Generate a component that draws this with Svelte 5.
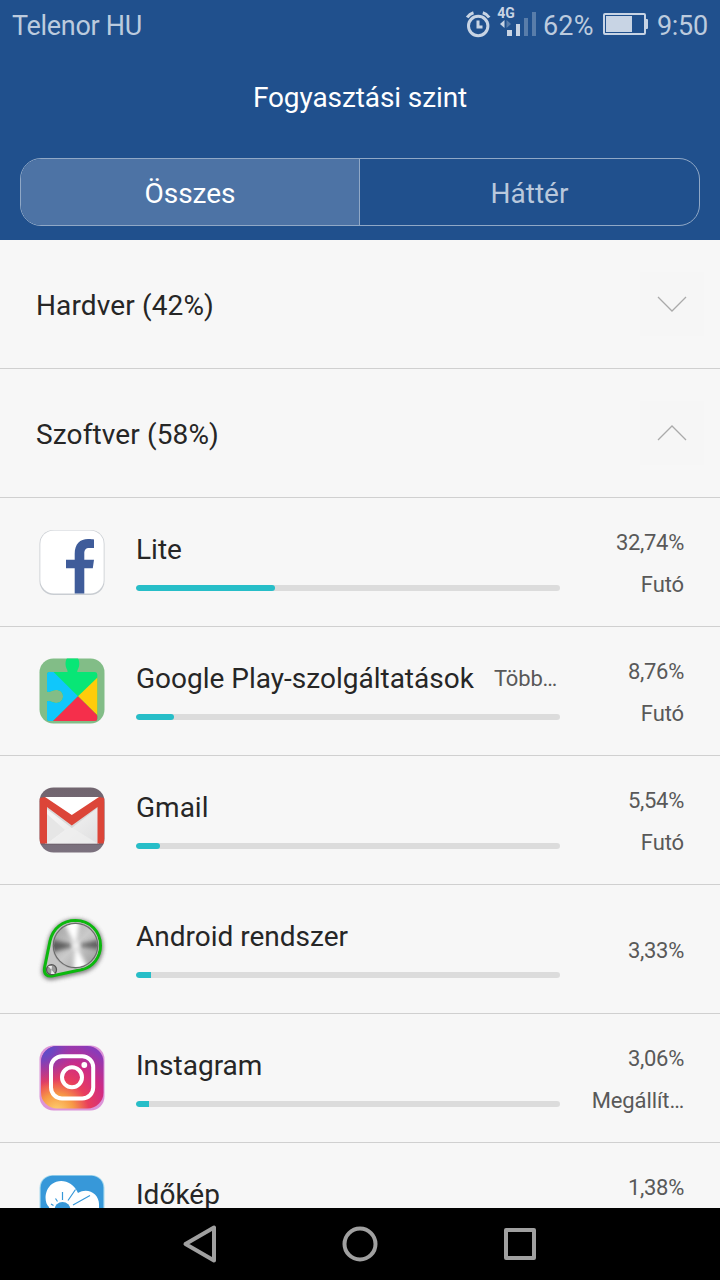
<script lang="ts">
	type App = {
		icon: string;
		name: string;
		usage: number;
		note?: string;
		state?: string;
	};

	const apps: App[] = [
		{ icon: 'facebook', name: 'Lite', usage: 32.74, state: 'Futó' },
		{ icon: 'play', name: 'Google Play-szolgáltatások', usage: 8.76, note: 'Több…', state: 'Futó' },
		{ icon: 'gmail', name: 'Gmail', usage: 5.54, state: 'Futó' },
		{ icon: 'android', name: 'Android rendszer', usage: 3.33 },
		{ icon: 'instagram', name: 'Instagram', usage: 3.06, state: 'Megállít…' },
		{ icon: 'idokep', name: 'Időkép', usage: 1.38, state: '' }
	];

	let tab = $state('all');
	let hardwareOpen = $state(false);
	let softwareOpen = $state(true);

	function percent(n: number) {
		return n.toFixed(2).replace('.', ',') + '%';
	}
</script>

{#snippet chevron(open: boolean)}
	<span class="chevron">
		<svg width="32" height="18" viewBox="0 0 32 18">
			<path d={open ? 'M2 16 L16 2 L30 16' : 'M2 2 L16 16 L30 2'} />
		</svg>
	</span>
{/snippet}

{#snippet appIcon(icon: string)}
	<svg class="icon" width="64" height="64" viewBox="0 0 64 64">
		{#if icon === 'facebook'}
			<rect x="-.5" y="0" width="65" height="65" rx="14" fill="#c9cdd2" />
			<rect x=".3" y=".4" width="63.4" height="63" rx="13.5" fill="#fff" />
			<path fill="#3f5c9a" d="M34.7 63.4V38.3H26V29.8H34.7V24C34.7 14 40 9 48 9C51 9 53 9.2 54 9.5V18H49.5C45.5 18 44.3 20 44.3 23.5V29.8H54L52.8 38.3H44.3V63.4Z" />
		{:else if icon === 'play'}
			<clipPath id="tile"><rect x="-.5" y="-.5" width="65" height="65" rx="14" /></clipPath>
			<clipPath id="puzzle">
				<path d="M9 13H27.5C28 11 25.5 9 25.5 5C25.5 0 28 -4 32.3 -4C37 -4 39.3 0 39.3 5C39.3 9 36.8 11 37.3 13H55Q57.3 13 57.3 15.5V59.5Q57.3 62 55 62H9.5Q7 62 7 59.5V42.5C10 41 12 44 16 44C20 44 23 41.5 23 37.3C23 33 20 31 16 31C12 31 10 34 7 32.5V15.5Q7 13 9 13Z" />
			</clipPath>
			<g clip-path="url(#tile)">
				<rect x="-1" y="-1" width="66" height="66" fill="#82bd87" />
				<g clip-path="url(#puzzle)">
					<rect x="0" y="-5" width="64" height="70" fill="#08e676" />
					<path d="M7 6.5L38 37.3L13 62H7Z" fill="#10c7fb" />
					<path d="M58 18L38 37.3L58 57Z" fill="#ffcc0a" />
					<path d="M38 37.3L12.5 62.5H58V57Z" fill="#f52f4b" />
				</g>
			</g>
		{:else if icon === 'gmail'}
			<linearGradient id="mailBack" x1="0" y1="0" x2="0" y2="1">
				<stop offset="0" stop-color="#71656f" />
				<stop offset="1" stop-color="#7b717e" />
			</linearGradient>
			<linearGradient id="paper" x1="0" y1="0" x2="1" y2="1">
				<stop offset=".3" stop-color="#f4f4f4" />
				<stop offset="1" stop-color="#dfdfe0" />
			</linearGradient>
			<clipPath id="mailTile"><rect x="-.5" y="-.5" width="65" height="65" rx="14" /></clipPath>
			<g clip-path="url(#mailTile)">
				<rect x="-1" y="-1" width="66" height="66" fill="url(#mailBack)" />
				<path d="M0 55.5H64V57H0Z" fill="#62515c" opacity=".35" />
				<rect x="5" y="9" width="54" height="46.5" fill="url(#paper)" />
				<path d="M5 9H59L31.8 29Z" fill="#fff" />
				<path d="M7 26L25 42L7 55.5Z" fill="#e6e6e6" />
				<path d="M7 55.5L25 42L32 39.5L57.5 55.5Z" fill="#efefef" opacity=".7" />
				<path d="M7 17L31.8 36L57.5 17V20L31.8 40L7 21Z" fill="#cfcfcf" opacity=".7" />
				<path d="M-.5 10L5 9L31.8 27L59 9L64.5 10V55.5H57.5V19L31.8 37.5L7 19V55.5H-.5Z" fill="#dc4538" />
			</g>
		{:else if icon === 'android'}
			<linearGradient id="metal" x1="0" y1="0" x2="1" y2="1">
				<stop offset="0" stop-color="#a0a0a0" />
				<stop offset=".5" stop-color="#cacaca" />
				<stop offset="1" stop-color="#999" />
			</linearGradient>
			<filter id="soft" x="-30%" y="-30%" width="160%" height="160%">
				<feGaussianBlur stdDeviation="2" />
			</filter>
			<clipPath id="disc"><circle cx="35.5" cy="28.5" r="21.5" /></clipPath>
			<path class="belt-shadow" filter="url(#soft)" d="M10 25C13 12 23 4 35.5 4C50 4 61 15.500 61 29.500C61 41 54 51 42 54L13 60.500C7 62 3 58 4 52Z" />
			<path class="belt" d="M10 24C13 11 23 3.500 35.500 3.500C50 3.500 60.500 14.500 60.500 28.500C60.500 40 53 50 42 52.500L13 58.800C7 60 3.500 57 4.500 51Z" />
			<circle cx="35.5" cy="28.5" r="23.5" fill="#b5b5b5" />
			<circle cx="35.5" cy="28.5" r="22.2" fill="url(#metal)" stroke="#6b6b6b" stroke-width="1.2" />
			<g clip-path="url(#disc)">
				<g filter="url(#soft)">
					<path d="M35.5 28.5L10 22V36Z" fill="#5f5f5f" />
					<path d="M35.5 28.5L62 22V33Z" fill="#626262" />
					<path d="M35.5 28.5L22 2H40Z" fill="#fff" />
					<path d="M35.5 28.5L33 56H51Z" fill="#fff" />
				</g>
				<circle cx="36" cy="28.5" r="4" fill="#f2f2f2" filter="url(#soft)" />
			</g>
			<circle cx="11.5" cy="52.7" r="5" fill="#999" stroke="#555" stroke-width="1.3" />
			<path d="M11.5 52.7L8 49H12ZM11.5 52.7L11 57H15Z" fill="#eee" />
		{:else if icon === 'instagram'}
			<radialGradient id="insta" cx=".25" cy="1.05" r="1.15">
				<stop offset="0" stop-color="#fed373" />
				<stop offset=".24" stop-color="#f79a46" />
				<stop offset=".45" stop-color="#e93e5c" />
				<stop offset=".7" stop-color="#d02b83" />
				<stop offset="1" stop-color="#8a3bb9" />
			</radialGradient>
			<radialGradient id="instaBlue" cx="0" cy="0" r=".65">
				<stop offset="0" stop-color="#4854d4" />
				<stop offset=".35" stop-color="#6848c5" stop-opacity=".85" />
				<stop offset="1" stop-color="#a336a8" stop-opacity="0" />
			</radialGradient>
			<rect x="-.5" y="-.5" width="65" height="65" rx="14" fill="#dc94d8" />
			<rect x="1" y="0" width="62.5" height="62.5" rx="16" fill="url(#insta)" />
			<rect x="1" y="0" width="62.5" height="62.5" rx="16" fill="url(#instaBlue)" />
			<rect x="11" y="10.3" width="42.2" height="42.2" rx="11" class="line" />
			<circle cx="32" cy="31.3" r="10" class="line" />
			<circle cx="44.3" cy="19" r="2.9" fill="#fff" />
		{:else}
			<rect x="-.5" y="0" width="65" height="65" rx="13" fill="#a5d9ee" />
			<rect x=".6" y=".8" width="62.8" height="63" rx="12" fill="#3798d9" />
			<path fill="#fff" d="M9 32C4 28 4 15 12 9C20 3 33 6 38 18C48 12 60 19 59 31L59 44H12Z" />
			<circle cx="22.5" cy="35" r="8" fill="#3798d9" />
			<path class="ray" d="M22.5 25V17M28 25.5L35.5 14.5M33 30L50 20.5M17.5 26.5L15.5 23.5M13.5 30.5L11 29" />
		{/if}
	</svg>
{/snippet}

<div class="screen">
	<header>
		<div class="status">
			<span class="carrier">Telenor HU</span>
			<svg class="alarm" width="26" height="28" viewBox="0 0 26 28">
				<circle cx="12.2" cy="15" r="9.7" />
				<path d="M12 9.5V16H16.5" />
				<path d="M1.2 6.5Q3.5 3 7.5 1.8M16.8 1.8Q21 3 23.2 6.5" />
			</svg>
			<svg class="signal" width="40" height="32" viewBox="0 0 40 32">
				<text x="-.7" y="11.5">4G</text>
				<path d="M2 18L6.5 14V22Z" />
				<path class="off" d="M8.5 14L13 18L8.5 22Z" />
				<rect x="9" y="24" width="5" height="6" />
				<rect x="18" y="18" width="4" height="12" />
				<rect class="off" x="26" y="12" width="4" height="18" />
				<rect class="off" x="34" y="6" width="4" height="24" />
			</svg>
			<span class="charge">62%</span>
			<svg class="battery" width="46" height="22" viewBox="0 0 46 22">
				<rect x="1" y="1" width="41" height="20" rx="1" />
				<path d="M3 3H29V19H3ZM43 6H44Q45 6 45 7V15Q45 16 44 16H43Z" />
			</svg>
			<span class="clock">9:50</span>
		</div>
		<h1>Fogyasztási szint</h1>
		<div class="tabs">
			<button class:active={tab === 'all'} onclick={() => (tab = 'all')}>Összes</button>
			<button class:active={tab === 'background'} onclick={() => (tab = 'background')}>Háttér</button>
		</div>
	</header>

	<main>
		<button class="group" onclick={() => (hardwareOpen = !hardwareOpen)}>
			<span class="label">Hardver (42%)</span>
			{@render chevron(hardwareOpen)}
		</button>
		<button class="group" onclick={() => (softwareOpen = !softwareOpen)}>
			<span class="label">Szoftver (58%)</span>
			{@render chevron(softwareOpen)}
		</button>

		{#if softwareOpen}
			{#each apps as app}
				<div class="row">
					{@render appIcon(app.icon)}
					<div class="info">
						<div class="title">
							<span class="name">{app.name}</span>
							{#if app.note}<span class="note">{app.note}</span>{/if}
						</div>
						<div class="track">
							<div class="fill" style="width: {Math.ceil(app.usage * 4.24)}px"></div>
						</div>
					</div>
					<div class="values">
						<span class="usage">{percent(app.usage)}</span>
						{#if app.state !== undefined}<span class="state">{app.state}</span>{/if}
					</div>
				</div>
			{/each}
		{/if}
	</main>

	<nav>
		<svg width="40" height="40" viewBox="0 0 40 40"><path d="M5.5 20L34 3.5V36.5Z" /></svg>
		<svg width="40" height="40" viewBox="0 0 40 40"><circle cx="20" cy="20" r="15.5" /></svg>
		<svg width="40" height="40" viewBox="0 0 40 40"><rect x="6" y="6" width="28" height="28" /></svg>
	</nav>
</div>

<style>
	:global(body) {
		font-family: Roboto, sans-serif;
	}

	.screen {
		display: flex;
		flex-direction: column;
		width: 720px;
		height: 1280px;
		overflow: hidden;
		background: #f7f7f7;
		color: #262626;
	}

	header {
		flex: none;
		height: 240px;
		background: #20508d;
	}

	.status {
		display: flex;
		align-items: center;
		height: 50px;
		padding: 0 12px;
		font-size: 27px;
		color: #bccbde;
	}

	.status span {
		padding-top: 2px;
	}

	.carrier {
		letter-spacing: -0.3px;
	}

	.charge {
		width: 51px;
		letter-spacing: 0.2px;
	}

	.clock {
		width: 51px;
		letter-spacing: -0.3px;
	}

	.alarm {
		margin: 0 6px 0 auto;
		fill: none;
		stroke: #c8d4e4;
		stroke-width: 3;
	}

	.signal {
		margin: -6px 5px 0 0;
		fill: #c8d4e4;
		overflow: visible;
	}

	.signal text {
		font-size: 14px;
		font-weight: 700;
	}

	.signal .off {
		fill: #597daa;
	}

	.battery {
		margin: -2px 8px 0 9px;
		fill: #c8d4e4;
	}

	.battery rect {
		fill: none;
		stroke: #c8d4e4;
		stroke-width: 2;
	}

	h1 {
		margin: 0;
		padding-top: 31px;
		font-size: 28px;
		font-weight: 400;
		line-height: 33px;
		letter-spacing: -0.1px;
		text-align: center;
		color: #fff;
	}

	button {
		border: 0;
		padding: 0;
		background: none;
		font: inherit;
		color: inherit;
	}

	.tabs {
		display: flex;
		box-sizing: border-box;
		height: 68px;
		margin: 44px 20px 0;
		border: 1px solid #90a8c6;
		border-radius: 21px;
		overflow: hidden;
	}

	.tabs button {
		flex: 1;
		padding-top: 3px;
		font-size: 28px;
		color: #b9c8dc;
	}

	.tabs button:first-child {
		flex: none;
		box-sizing: border-box;
		width: 339px;
		border-right: 1px solid #90a8c6;
	}

	.tabs .active {
		background: #4d73a5;
		color: #fff;
	}

	main {
		flex: 1;
		min-height: 0;
		overflow: hidden;
	}

	.group {
		display: flex;
		align-items: center;
		justify-content: space-between;
		box-sizing: border-box;
		width: 100%;
		height: 129px;
		padding: 0 16px 0 36px;
		border-bottom: 1px solid #d0d0d0;
		font-size: 28px;
	}

	.label {
		padding-top: 2px;
		letter-spacing: 0.13px;
	}

	.chevron {
		display: flex;
		align-items: center;
		justify-content: center;
		width: 64px;
		height: 64px;
		background: #f6f6f6;
	}

	.chevron path {
		fill: none;
		stroke: #aaa;
		stroke-width: 1.3;
	}

	.row {
		display: flex;
		box-sizing: border-box;
		height: 129px;
		padding: 0 36px 0 40px;
		border-bottom: 1px solid #d0d0d0;
	}

	.icon {
		flex: none;
		margin: 32px 32px 0 0;
		overflow: visible;
	}

	.icon .line {
		fill: none;
		stroke: #fff;
		stroke-width: 4;
	}

	.icon .belt {
		fill: #c4c4c4;
		stroke: #0cb80e;
		stroke-width: 3;
	}

	.icon .belt-shadow {
		fill: #777;
		stroke: #555;
		stroke-width: 4;
		opacity: 0.8;
	}

	.icon .ray {
		fill: none;
		stroke: #3798d9;
		stroke-width: 1.2;
	}

	.info {
		width: 424px;
		padding-top: 34px;
	}

	.title {
		display: flex;
		align-items: center;
		height: 34px;
		white-space: nowrap;
	}

	.name {
		font-size: 28px;
	}

	.note {
		margin-left: 20px;
		font-size: 22px;
		letter-spacing: -0.15px;
		color: #595959;
	}

	.track {
		height: 6px;
		margin-top: 19px;
		border-radius: 3px;
		background: #dcdcdc;
		overflow: hidden;
	}

	.fill {
		height: 6px;
		border-radius: 3px 0 0 3px;
		background: #27bec8;
	}

	.row:nth-child(-n + 5) .fill {
		border-radius: 3px;
	}

	.values {
		display: flex;
		flex: 1;
		flex-direction: column;
		justify-content: center;
		height: 84px;
		margin-top: 24px;
		font-size: 22px;
		line-height: 42px;
		text-align: right;
		color: #595959;
	}

	.usage {
		letter-spacing: -0.3px;
	}

	.state {
		min-height: 42px;
		letter-spacing: -0.1px;
	}

	nav {
		display: flex;
		flex: none;
		align-items: center;
		justify-content: center;
		gap: 120px;
		height: 72px;
		background: #000;
	}

	nav svg {
		fill: none;
		stroke: #a0a0a0;
		stroke-width: 4;
		stroke-linejoin: round;
	}
</style>
